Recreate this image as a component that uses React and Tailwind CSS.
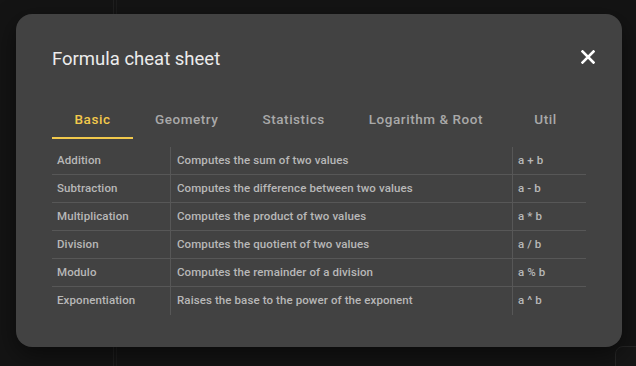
import React from "react";

const rows = [
  ["Addition", "Computes the sum of two values", "a + b"],
  ["Subtraction", "Computes the difference between two values", "a - b"],
  ["Multiplication", "Computes the product of two values", "a * b"],
  ["Division", "Computes the quotient of two values", "a / b"],
  ["Modulo", "Computes the remainder of a division", "a % b"],
  ["Exponentiation", "Raises the base to the power of the exponent", "a ^ b"],
];

const tabs = ["Basic", "Geometry", "Statistics", "Logarithm & Root", "Util"];

export default function App() {
  return (
    <div
      className="relative w-[636px] h-[366px] bg-[#141414] overflow-hidden"
      style={{ fontFamily: "Roboto, 'Noto Sans', sans-serif" }}
    >
      {/* faint background details */}
      <div className="absolute left-[113px] top-0 h-full w-px bg-[#1f1f1f]" />
      <div className="absolute left-[116px] top-0 h-full w-px bg-[#1c1c1c]" />
      <div className="absolute left-[615px] top-[346px] w-[40px] h-[40px] rounded-tl-[8px] border border-[#262626] bg-[#161616]" />

      <div className="absolute left-[16px] top-[14px] w-[606px] h-[333px] rounded-[16px] bg-[#424242] shadow-[0_8px_24px_rgba(0,0,0,0.5)] pt-[33px] px-[36px]">
        <div className="flex items-start justify-between">
          <h2 className="text-[18.5px] leading-[24px] text-[#ececec] font-normal">
            Formula cheat sheet
          </h2>
          <button className="mt-[-2px] mr-[-14px] w-[24px] h-[24px] flex items-center justify-center">
            <svg width="14" height="14" viewBox="0 0 14 14">
              <path
                d="M1.5 1.5 L12.5 12.5 M12.5 1.5 L1.5 12.5"
                stroke="#ffffff"
                strokeWidth="2.6"
                strokeLinecap="square"
              />
            </svg>
          </button>
        </div>

        <div className="mt-[28px] flex h-[40px]">
          {tabs.map((t, i) => (
            <div
              key={t}
              className={
                "relative shrink-0 whitespace-nowrap flex items-center justify-center px-[22px] min-w-[81px] text-[13.5px] font-medium tracking-[0.55px] " +
                (i === 0 ? "text-[#f2c94c]" : "text-[#a9a9a9]")
              }
            >
              {t}
              {i === 0 && (
                <div className="absolute left-0 right-0 bottom-0 h-[2px] bg-[#f2c94c]" />
              )}
            </div>
          ))}
        </div>

        <div className="mt-[8px] w-[534px] flex flex-col">
          {rows.map((r, i) => (
            <div
              key={r[0]}
              className={
                "flex h-[28px] text-[11.5px] font-medium text-[#b8b8b8] tracking-[0.1px] " +
                (i < rows.length - 1 ? "border-b border-[#575757]" : "")
              }
            >
              <div className="w-[119px] pl-[5px] flex items-center border-r border-[#575757]">
                {r[0]}
              </div>
              <div className="w-[342px] pl-[6px] flex items-center border-r border-[#575757]">
                {r[1]}
              </div>
              <div className="flex-1 pl-[5px] flex items-center">{r[2]}</div>
            </div>
          ))}
        </div>
      </div>
    </div>
  );
}
